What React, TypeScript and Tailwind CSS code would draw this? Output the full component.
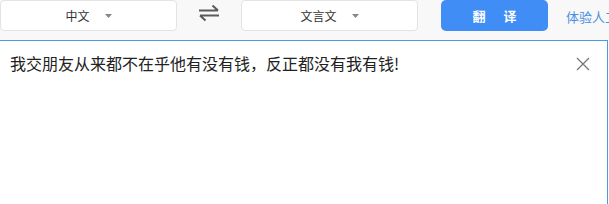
import React from 'react';

const Caret = () => (
  <svg width="7" height="4" viewBox="0 0 7 4" className="ml-[15px] mt-[1px]">
    <path d="M0 0h7L3.5 4z" fill="#888" />
  </svg>
);

const LangSelect = ({ label }: { label: string }) => (
  <div className="flex h-[31px] w-[177px] shrink-0 items-center justify-center rounded-[4px] border border-[#e3e3e3] bg-white text-[12px] text-[#333]">
    <span>{label}</span>
    <Caret />
  </div>
);

export default function App() {
  return (
    <div
      className="h-[204px] w-[609px] overflow-hidden bg-[#f9f8f8]"
      style={{ fontFamily: '"Noto Sans CJK SC", "Liberation Sans", sans-serif' }}
    >
      <div className="flex h-[40px] items-start">
        <LangSelect label="中文" />
        <div className="flex w-[64px] shrink-0 justify-center pt-[4px]">
          <svg width="24" height="18" viewBox="0 0 24 18" fill="none" stroke="#5a5a5a" strokeWidth="2">
            <path d="M2 6.5h19M15.5 1.5l5.5 5" />
            <path d="M22 11.5H3M8.5 16.5L3 11.5" />
          </svg>
        </div>
        <LangSelect label="文言文" />
        <button className="ml-[23px] flex h-[31px] w-[107px] shrink-0 items-center justify-center gap-[18px] rounded-[5px] bg-[#3f8df5] text-[13px] font-bold text-white">
          <span>翻</span>
          <span>译</span>
        </button>
        <span className="ml-[18px] shrink-0 whitespace-nowrap pt-[7px] text-[13px] text-[#4a90e2]">体验人工翻译</span>
      </div>
      <div className="flex h-[164px] w-[608px] items-start justify-between border-t border-r border-[#4a9ae8] bg-white pl-[10px] pr-[17px] pt-[11px]">
        <p className="text-[16px] leading-[22px] text-[#222]">我交朋友从来都不在乎他有没有钱，反正都没有我有钱!</p>
        <svg width="14" height="14" viewBox="0 0 14 14" className="mt-[5px]" stroke="#777" strokeWidth="1.3">
          <path d="M1 1l12 12M13 1L1 13" />
        </svg>
      </div>
    </div>
  );
}
